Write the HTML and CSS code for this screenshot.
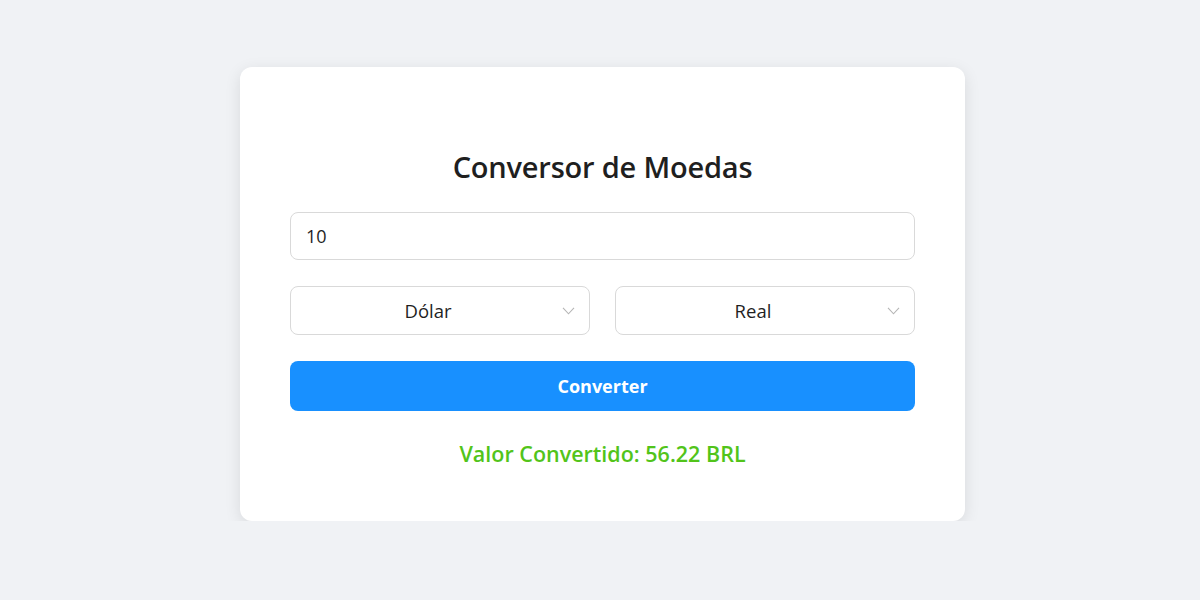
FILE: index.html
```html
<!DOCTYPE html>
<html lang="pt-BR">
<head>
    <meta charset="UTF-8">
    <meta name="viewport" content="width=device-width, initial-scale=1.0">
    <title>Conversor de Moedas</title>
    <link rel="stylesheet" href="styles.css">
</head>
<body>

<div class="container">
    <h2>Conversor de Moedas</h2>

    <input type="number" id="amount" class="field" value="10">

    <div class="select-row">
        <div class="select-wrap">
            <select id="from" class="field">
                <option value="USD">Dólar</option>
                <option value="BRL">Real</option>
                <option value="EUR">Euro</option>
            </select>
            <svg class="arrow" viewBox="0 0 12 8"><path d="M0.5 0.8 L6 6.8 L11.5 0.8" /></svg>
        </div>
        <div class="select-wrap">
            <select id="to" class="field">
                <option value="BRL">Real</option>
                <option value="USD">Dólar</option>
                <option value="EUR">Euro</option>
            </select>
            <svg class="arrow" viewBox="0 0 12 8"><path d="M0.5 0.8 L6 6.8 L11.5 0.8" /></svg>
        </div>
    </div>

    <button class="convert">Converter</button>

    <p class="result">Valor Convertido: 56.22 BRL</p>
</div>

</body>
</html>
```

FILE: styles.css
```css
body {
    margin: 0;
    padding: 67px 0 0 5px;
    background-color: #f0f2f5;
    font-family: "Open Sans", "Noto Sans", sans-serif;
    color: #1f1f1f;
    display: flex;
    justify-content: center;
}

.container {
    width: 725px;
    height: 454px;
    box-sizing: border-box;
    background-color: white;
    border-radius: 12px;
    box-shadow: 0 4px 16px rgba(0, 0, 0, 0.1);
    padding: 0 50px;
    display: flex;
    flex-direction: column;
}

h2 {
    margin: 79px 0 25px;
    font-size: 29px;
    font-weight: 600;
    text-align: center;
    line-height: 41px;
    letter-spacing: -0.2px;
}

.field {
    width: 100%;
    height: 48px;
    box-sizing: border-box;
    border: 1px solid #d9d9d9;
    border-radius: 8px;
    background: white;
    font-family: inherit;
    font-size: 18px;
    color: #1f1f1f;
    outline: none;
}

#amount {
    padding: 0 15px;
}

.select-row {
    display: flex;
    gap: 25px;
    margin-top: 26px;
}

.select-wrap {
    position: relative;
    flex: 1;
}

.select-wrap select {
    height: 49px;
    appearance: none;
    -webkit-appearance: none;
    text-align: center;
    text-align-last: center;
    padding: 0 36px 0 12px;
    font-size: 18.5px;
}

.arrow {
    position: absolute;
    right: 15px;
    top: 21px;
    width: 13px;
    height: 8px;
    pointer-events: none;
}

.arrow path {
    fill: none;
    stroke: #b5b5b5;
    stroke-width: 1.1;
}

.convert {
    margin-top: 26px;
    height: 50px;
    border: none;
    border-radius: 8px;
    background-color: #1890ff;
    color: white;
    font-family: inherit;
    font-size: 18px;
    font-weight: 700;
    cursor: pointer;
}

.result {
    margin: 28px 0 0;
    text-align: center;
    color: #52c41a;
    font-size: 21.5px;
    font-weight: 600;
}
```
